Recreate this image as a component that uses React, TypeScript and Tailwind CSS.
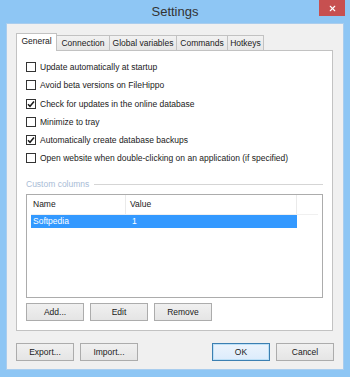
import { X } from "lucide-react";

const options = [
  { label: "Update automatically at startup", checked: false },
  { label: "Avoid beta versions on FileHippo", checked: false },
  { label: "Check for updates in the online database", checked: true },
  { label: "Minimize to tray", checked: false },
  { label: "Automatically create database backups", checked: true },
  { label: "Open website when double-clicking on an application (if specified)", checked: false },
];

const tabs = [
  { label: "Connection", w: "w-[53px]" },
  { label: "Global variables", w: "w-[67px]" },
  { label: "Commands", w: "w-[51px]" },
  { label: "Hotkeys", w: "w-[36px]" },
];

function Checkbox({ checked }: { checked: boolean }) {
  return (
    <div className="flex h-[10px] w-[10px] flex-none items-center justify-center border border-[#333] bg-white">
      {checked && (
        <svg width="8" height="8" viewBox="0 0 8 8">
          <path d="M1 4.2 L3 6.3 L7 1.5" fill="none" stroke="#1a1a1a" strokeWidth="1.5" />
        </svg>
      )}
    </div>
  );
}

function Button({ label, primary }: { label: string; primary?: boolean }) {
  return (
    <button
      type="button"
      className={
        primary
          ? "flex h-[18px] w-[58px] items-center justify-center border border-[#3c7fb1] bg-linear-to-b from-[#ecf4fc] to-[#dcecfc] text-[8.5px] text-[#1a1a1a] shadow-[inset_0_0_0_1px_#bde0f7]"
          : "flex h-[18px] w-[58px] items-center justify-center border border-[#acacac] bg-linear-to-b from-[#f0f0f0] to-[#e5e5e5] text-[8.5px] text-[#1a1a1a]"
      }
    >
      {label}
    </button>
  );
}

export default function App() {
  return (
    <div className="flex h-[377px] w-[350px] flex-col bg-[#8ec6f4] font-['Liberation_Sans',Arial,sans-serif] text-[8.5px] text-[#1a1a1a]">
      <div className="grid h-[23px] flex-none grid-cols-[1fr_auto_1fr] items-start">
        <div />
        <span className="pt-[4px] text-[13px] leading-[16px] text-[#333]">Settings</span>
        <div className="flex justify-end pr-[5px]">
          <div className="flex h-[16px] w-[26px] items-center justify-center bg-[#c75050]">
            <X className="h-[9px] w-[9px] text-white" strokeWidth={3} />
          </div>
        </div>
      </div>

      <div className="mx-[6px] mb-[7px] flex flex-1 flex-col border border-[#a9cdee] bg-[#f0f0f0] px-[9px] pt-[9px]">
        <div className="flex h-[17px] items-end">
          <div className="relative z-10 -mb-px flex h-[18px] w-[41px] items-center justify-center border border-b-0 border-[#c2c2c2] bg-white pb-[2px]">
            General
          </div>
          {tabs.map((t) => (
            <div
              key={t.label}
              className={`flex h-[15px] ${t.w} items-center justify-center border border-b-0 border-l-0 border-[#c2c2c2] bg-linear-to-b from-[#f2f2f2] to-[#e6e6e6]`}
            >
              {t.label}
            </div>
          ))}
        </div>

        <div className="flex h-[281px] w-[317px] flex-col border border-[#c2c2c2] bg-white px-[9px] pt-[11px]">
          <div className="flex flex-col gap-[8.3px]">
            {options.map((o) => (
              <div key={o.label} className="flex h-[10px] items-center gap-[4px]">
                <Checkbox checked={o.checked} />
                <span className="whitespace-nowrap leading-[10px]">{o.label}</span>
              </div>
            ))}
          </div>

          <div className="mt-[15px] flex items-center gap-[5px]">
            <span className="text-[#a9bcd6]">Custom columns</span>
            <div className="h-px flex-1 bg-[#d5d5d5]" />
          </div>

          <div className="mt-[3px] flex h-[104px] flex-col border border-[#acacac] bg-white px-[4px]">
            <div className="flex h-[20px] border-b border-[#f0f0f0]">
              <div className="flex w-[95px] items-center border-r border-[#eaeaea] pl-[2px]">Name</div>
              <div className="flex w-[171px] items-center border-r border-[#eaeaea] pl-[4px]">Value</div>
            </div>
            <div className="flex h-[13px] w-[266px] items-center bg-[#3399ff] text-white">
              <span className="w-[95px] pl-[2px]">Softpedia</span>
              <span className="pl-[6px]">1</span>
            </div>
          </div>

          <div className="mt-[5px] flex gap-[6px]">
            <Button label="Add..." />
            <Button label="Edit" />
            <Button label="Remove" />
          </div>
        </div>

        <div className="mt-[12px] flex">
          <div className="flex gap-[6px]">
            <Button label="Export..." />
            <Button label="Import..." />
          </div>
          <div className="ml-auto flex gap-[6px]">
            <Button label="OK" primary />
            <Button label="Cancel" />
          </div>
        </div>
      </div>
    </div>
  );
}
